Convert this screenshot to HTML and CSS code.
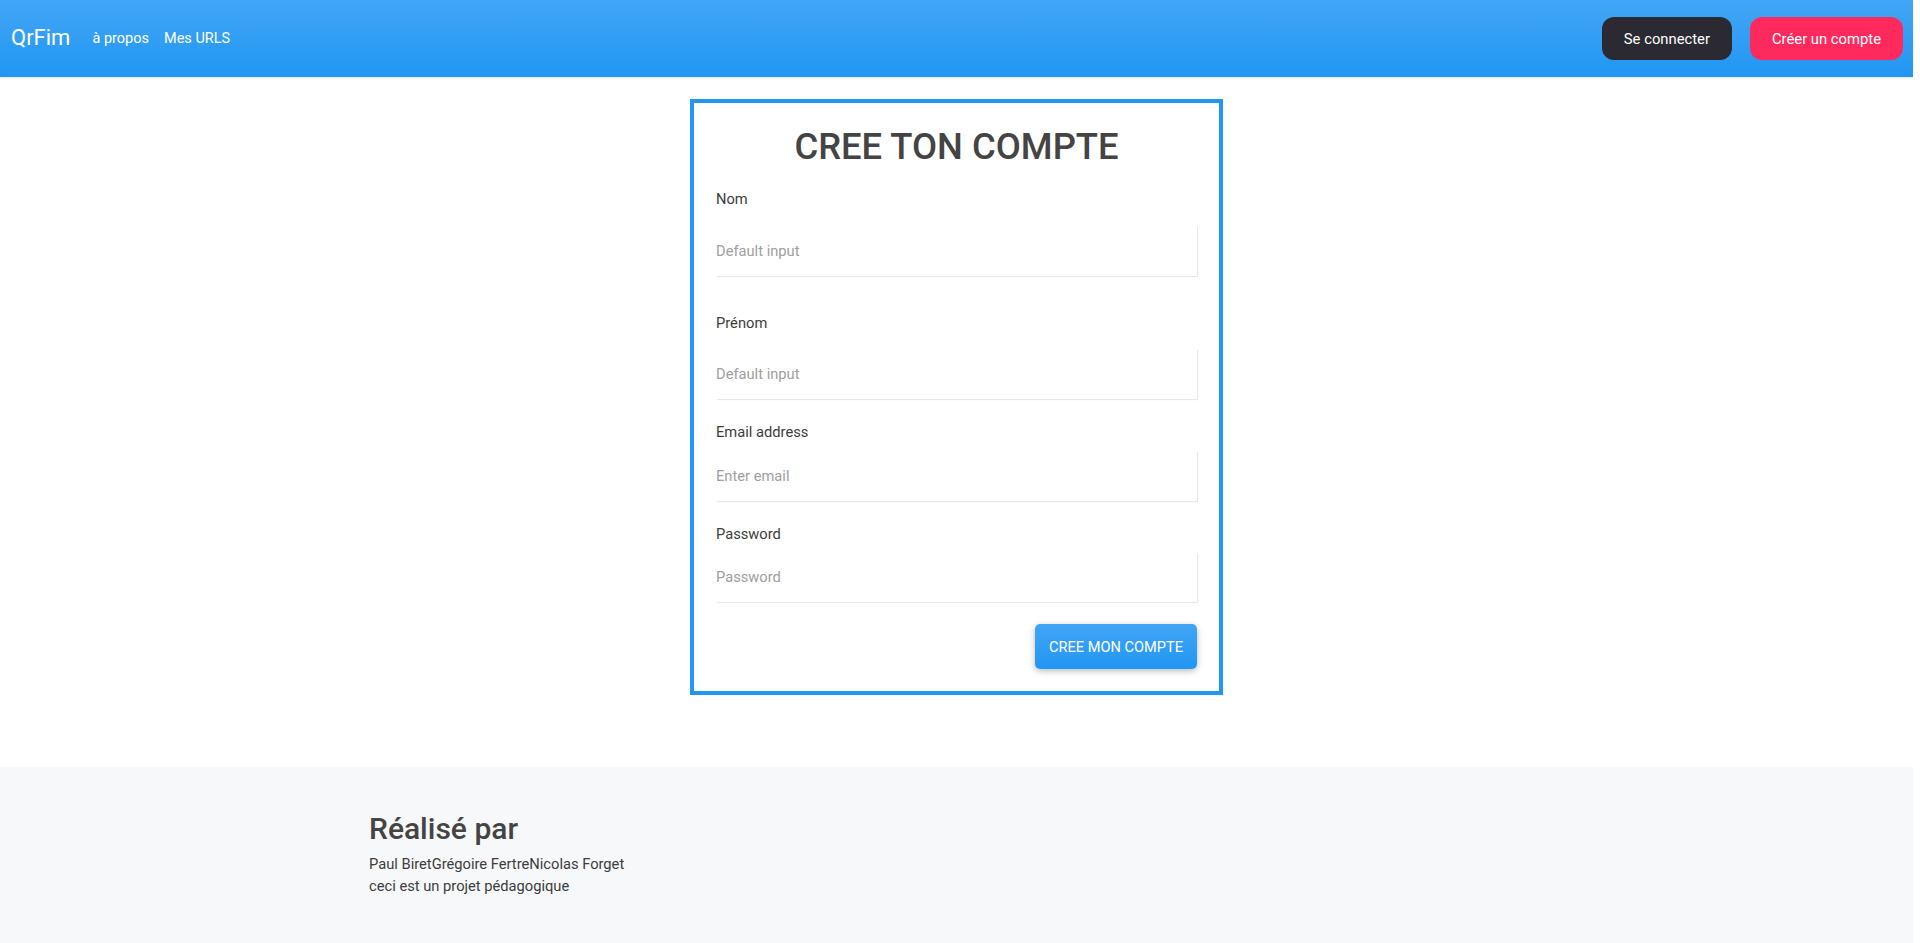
FILE: index.html
```html
<!DOCTYPE html>
<html lang="fr">
<head>
<meta charset="utf-8">
<title>QrFim - Créer un compte</title>
<link rel="stylesheet" href="styles.css">
</head>
<body>
<div class="page">
  <header class="navbar">
    <div class="nav-left">
      <a class="brand" href="#">QrFim</a>
      <nav class="nav-links">
        <a href="#">à propos</a>
        <a href="#">Mes URLS</a>
      </nav>
    </div>
    <div class="nav-right">
      <button class="btn-nav btn-dark">Se connecter</button>
      <button class="btn-nav btn-pink">Créer un compte</button>
    </div>
  </header>

  <main class="main">
    <form class="card">
      <h1 class="card-title">CREE TON COMPTE</h1>
      <div class="group group-wide group-first">
        <label class="label" for="nom">Nom</label>
        <input class="input" id="nom" type="text" placeholder="Default input">
      </div>
      <div class="group group-wide">
        <label class="label" for="prenom">Prénom</label>
        <input class="input" id="prenom" type="text" placeholder="Default input">
      </div>
      <div class="group">
        <label class="label" for="email">Email address</label>
        <input class="input" id="email" type="email" placeholder="Enter email">
      </div>
      <div class="group group-last">
        <label class="label" for="password">Password</label>
        <input class="input" id="password" type="password" placeholder="Password">
      </div>
      <div class="actions">
        <button class="btn-submit" type="button">CREE MON COMPTE</button>
      </div>
    </form>
  </main>

  <footer class="footer">
    <div class="footer-inner">
      <h2 class="footer-title">Réalisé par</h2>
      <p class="footer-text">Paul BiretGrégoire FertreNicolas Forget<br>ceci est un projet pédagogique</p>
    </div>
  </footer>
</div>
</body>
</html>
```

FILE: styles.css
```css
* {
  box-sizing: border-box;
}

html, body {
  margin: 0;
  padding: 0;
  background: #ffffff;
}

body {
  font-family: Roboto, "Liberation Sans", Arial, sans-serif;
  font-size: 14.7px;
  line-height: 1.5;
  color: #3c3c3c;
  overflow: hidden;
}

.page {
  margin-right: 7px;
}

/* NAVBAR */
.navbar {
  height: 77px;
  display: flex;
  align-items: center;
  justify-content: space-between;
  padding: 0 10px 0 11px;
  background: linear-gradient(to bottom, #43a6f5, #2196f3);
  box-shadow: 0 1px 2px rgba(0, 0, 0, 0.12);
  position: relative;
  z-index: 1;
}

.nav-left {
  display: flex;
  align-items: center;
}

.brand {
  font-size: 22px;
  line-height: 1.2;
  color: #ffffff;
  text-decoration: none;
  margin-right: 22px;
}

.nav-links {
  display: flex;
  gap: 15px;
}

.nav-links a {
  font-size: 14.5px;
  line-height: 1.2;
  color: #ffffff;
  text-decoration: none;
}

.nav-right {
  display: flex;
  align-items: center;
  gap: 18px;
}

.btn-nav {
  height: 43px;
  padding: 0 22px;
  border: none;
  border-radius: 12px;
  font-family: Roboto, "Liberation Sans", Arial, sans-serif;
  font-size: 14.8px;
  color: #ffffff;
  cursor: pointer;
}

.btn-dark {
  background: #2b2a33;
}

.btn-pink {
  background: #fe2a5e;
}

/* MAIN */
.main {
  padding: 22px 0 72px;
}

.card {
  width: 533px;
  margin: 0 auto;
  border: 4px solid #2196f3;
  padding: 22px;
  background: #ffffff;
}

.card-title {
  margin: 0 0 21px;
  font-size: 36.4px;
  line-height: 43px;
  font-weight: 500;
  color: #444444;
  text-align: center;
}

.group {
  display: flex;
  flex-direction: column;
  margin-bottom: 23px;
}

.group-first {
  margin-bottom: 37px;
}

.group-last {
  margin-bottom: 22px;
}

.label {
  line-height: 21.6px;
  color: #3c3c3c;
  margin-bottom: 7px;
}

.group-wide .label {
  margin-bottom: 15px;
}

.input {
  height: 50px;
  width: 100%;
  border: none;
  padding: 0;
  font-family: Roboto, "Liberation Sans", Arial, sans-serif;
  font-size: 14.7px;
  color: #3c3c3c;
  background: #ffffff;
  box-shadow: 1px 1px 1px rgba(0, 0, 0, 0.09);
  outline: none;
}

.input::placeholder {
  color: #9e9e9e;
}

.actions {
  display: flex;
  justify-content: flex-end;
}

.btn-submit {
  height: 45px;
  padding: 0 14px;
  border: none;
  border-radius: 5px;
  background: linear-gradient(to bottom, #42a5f5, #2196f3);
  box-shadow: 0 2px 5px rgba(0, 0, 0, 0.16), 0 2px 10px rgba(0, 0, 0, 0.12);
  color: #ffffff;
  font-family: Roboto, "Liberation Sans", Arial, sans-serif;
  font-size: 14.6px;
  cursor: pointer;
}

/* FOOTER */
.footer {
  background: #f7f8fa;
  padding: 44px 0 60px;
}

.footer-inner {
  max-width: 1175px;
  margin: 0 auto;
}

.footer-title {
  margin: 0 0 7px;
  font-size: 30px;
  line-height: 36px;
  font-weight: 500;
  color: #444444;
}

.footer-text {
  margin: 0;
  line-height: 21.6px;
  color: #3c3c3c;
}
```
